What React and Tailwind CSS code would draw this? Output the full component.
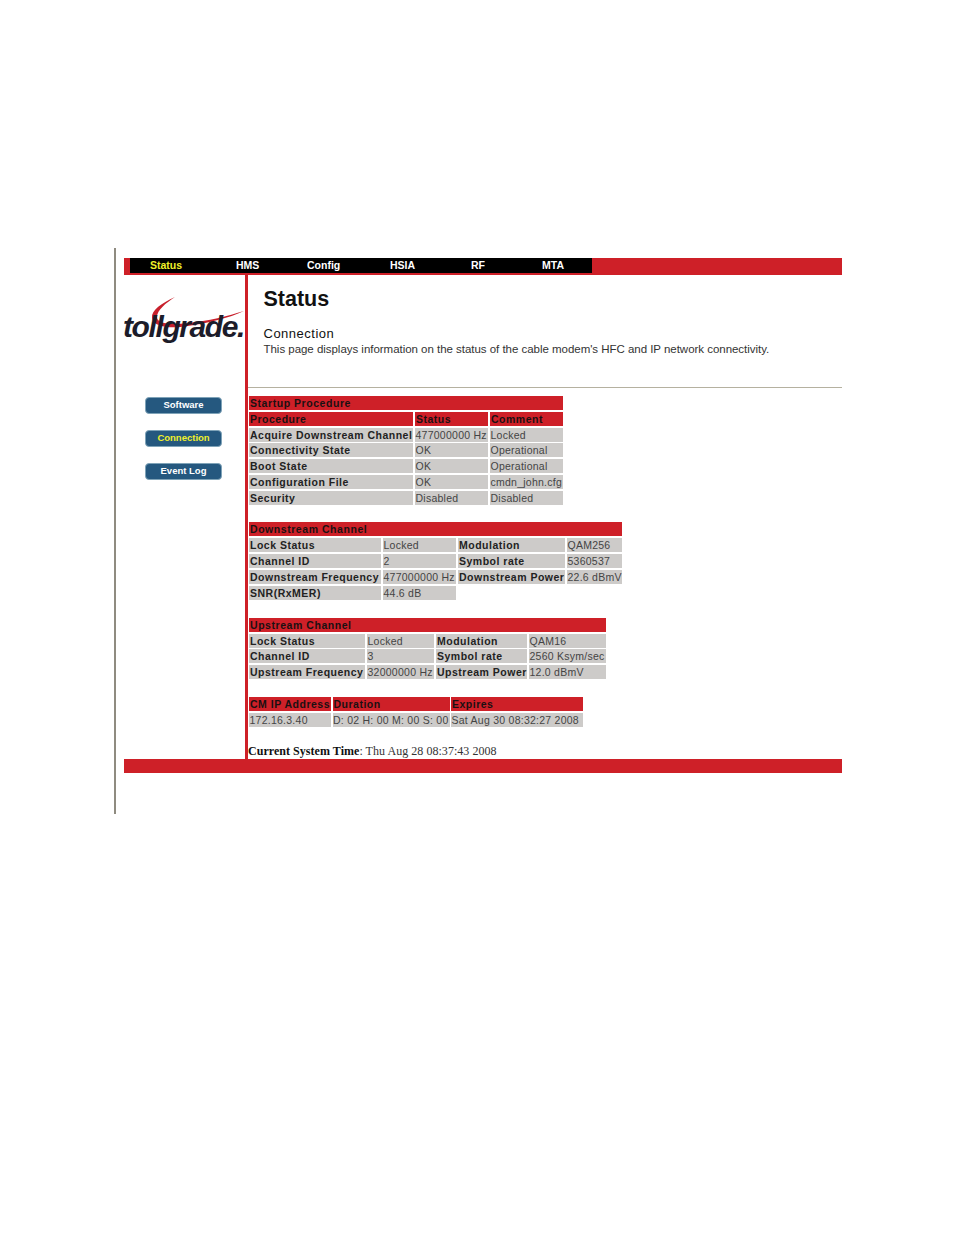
import React from 'react';

const navItems = [
  { label: 'Status', className: 'w-[74px] pl-[20px] text-[#f0f02a]' },
  { label: 'HMS', className: 'w-[71px] pl-[32px] text-white' },
  { label: 'Config', className: 'w-[82px] pl-[32px] text-white' },
  { label: 'HSIA', className: 'w-[81px] pl-[33px] text-white' },
  { label: 'RF', className: 'w-[72px] pl-[33px] text-white' },
  { label: 'MTA', className: 'flex-1 pl-[32px] text-white' },
];

const Title = ({ children }) => (
  <div className="col-span-full bg-[#ce2028] px-[1px] text-[10.5px] leading-[14px] font-bold tracking-[0.55px] text-[#1a1012]">
    {children}
  </div>
);

const Head = ({ children }) => (
  <div className="bg-[#ce2028] px-[1px] text-[10.5px] leading-[14px] font-bold tracking-[0.5px] whitespace-nowrap text-[#1a1012]">
    {children}
  </div>
);

const Label = ({ children }) => (
  <div className="bg-[#cdcbc9] px-[1px] text-[10.5px] leading-[14px] font-bold tracking-[0.5px] whitespace-nowrap text-[#222]">
    {children}
  </div>
);

const Value = ({ children }) => (
  <div className="bg-[#cdcbc9] pl-[0.5px] text-[10.5px] leading-[14px] tracking-[0.25px] whitespace-nowrap text-[#444]">
    {children}
  </div>
);

const NavButton = ({ label, active }) => (
  <button
    className={`h-[17px] w-[77px] rounded-[4px] border border-[#7fa3b8] bg-[#25587f] pb-[1px] text-[9.5px] leading-[14px] font-bold ${active ? 'text-[#f0f02a]' : 'text-white'}`}
  >
    {label}
  </button>
);

const Logo = () => (
  <svg width="122" height="50" viewBox="0 0 122 50" className="block">
    <path d="M51 2 C38 8 27 15 28 23 C29 32 46 34 64 31 C84 28 105 23 120 16 C104 21 84 26 64 28 C47 30 33 29 33 22 C33 15 42 8 51 2 Z" fill="#c8202c" />
    <text
      x="-1"
      y="42"
      fontFamily="'Liberation Sans', sans-serif"
      fontSize="30"
      fontWeight="700"
      fontStyle="italic"
      letterSpacing="-1.4"
      fill="#1c1c2a"
    >
      tollgrade.
    </text>
  </svg>
);

const App = () => {
  return (
    <div className="h-[1235px] bg-white pt-[248px] pl-[114px] font-['Liberation_Sans',Arial,sans-serif]">
      <div className="h-[566px] w-[728px] border-l-2 border-[#8f8b80] pt-[10px] pl-[8px]">
        <div className="w-[718px]">
          <div className="h-[17px] bg-[#ce2028] pl-[6px]">
            <div className="flex h-[15px] w-[462px] bg-black text-[10.5px] leading-[15px] font-bold">
              {navItems.map((item) => (
                <span key={item.label} className={item.className}>{item.label}</span>
              ))}
            </div>
          </div>

          <div className="flex h-[484px]">
            <div className="w-[121px]">
              <div className="pt-[20px]">
                <Logo />
              </div>
              <div className="flex flex-col items-start gap-[16px] pt-[52px] pl-[21px]">
                <NavButton label="Software" />
                <NavButton label="Connection" active />
                <NavButton label="Event Log" />
              </div>
            </div>

            <div className="w-[597px] border-l-[3px] border-[#ce2028]">
              <div className="h-[113px] border-b border-[#b5b1a0] pl-[15.5px]">
                <h1 className="pt-[11px] text-[21.5px] leading-[26px] font-bold text-[#111]">Status</h1>
                <h2 className="pt-[14px] text-[13px] leading-[16px] tracking-[0.5px] text-[#111]">Connection</h2>
                <p className="text-[11.5px] leading-[14px] tracking-[-0.03px] text-[#333]">
                  This page displays information on the status of the cable modem's HFC and IP network connectivity.
                </p>
              </div>

              <div className="pt-[8px] pl-[1px]">
                <div className="grid w-[314px] grid-cols-[164px_73px_73px] auto-rows-[14px] gap-x-[2px] gap-y-[1.8px]">
                  <Title>Startup Procedure</Title>
                  <Head>Procedure</Head><Head>Status</Head><Head>Comment</Head>
                  <Label>Acquire Downstream Channel</Label><Value>477000000 Hz</Value><Value>Locked</Value>
                  <Label>Connectivity State</Label><Value>OK</Value><Value>Operational</Value>
                  <Label>Boot State</Label><Value>OK</Value><Value>Operational</Value>
                  <Label>Configuration File</Label><Value>OK</Value><Value>cmdn_john.cfg</Value>
                  <Label>Security</Label><Value>Disabled</Value><Value>Disabled</Value>
                </div>

                <div className="mt-[17px] grid w-[373px] grid-cols-[132px_73px_107px_55px] auto-rows-[14px] gap-x-[2px] gap-y-[2px]">
                  <Title>Downstream Channel</Title>
                  <Label>Lock Status</Label><Value>Locked</Value><Label>Modulation</Label><Value>QAM256</Value>
                  <Label>Channel ID</Label><Value>2</Value><Label>Symbol rate</Label><Value>5360537</Value>
                  <Label>Downstream Frequency</Label><Value>477000000 Hz</Value><Label>Downstream Power</Label><Value>22.6 dBmV</Value>
                  <Label>SNR(RxMER)</Label><Value>44.6 dB</Value>
                </div>

                <div className="mt-[18px] grid w-[357px] grid-cols-[116px_67px_91px_77px] auto-rows-[14px] gap-x-[2px] gap-y-[1.8px]">
                  <Title>Upstream Channel</Title>
                  <Label>Lock Status</Label><Value>Locked</Value><Label>Modulation</Label><Value>QAM16</Value>
                  <Label>Channel ID</Label><Value>3</Value><Label>Symbol rate</Label><Value>2560 Ksym/sec</Value>
                  <Label>Upstream Frequency</Label><Value>32000000 Hz</Value><Label>Upstream Power</Label><Value>12.0 dBmV</Value>
                </div>

                <div className="mt-[18px] grid w-[334px] grid-cols-[82px_117px_132px] auto-rows-[14px] gap-x-[1.5px] gap-y-[2px]">
                  <Head>CM IP Address</Head><Head>Duration</Head><Head>Expires</Head>
                  <Value>172.16.3.40</Value><Value>D: 02 H: 00 M: 00 S: 00</Value><Value>Sat Aug 30 08:32:27 2008</Value>
                </div>
              </div>

              <p className="pt-[18px] font-['Liberation_Serif',serif] text-[12px] leading-[13px] tracking-[0.04px] text-[#333]">
                <b className="text-[#111]">Current System Time</b>: Thu Aug 28 08:37:43 2008
              </p>
            </div>
          </div>

          <div className="h-[14px] bg-[#ce2028]" />
        </div>
      </div>
    </div>
  );
};

export default App;
